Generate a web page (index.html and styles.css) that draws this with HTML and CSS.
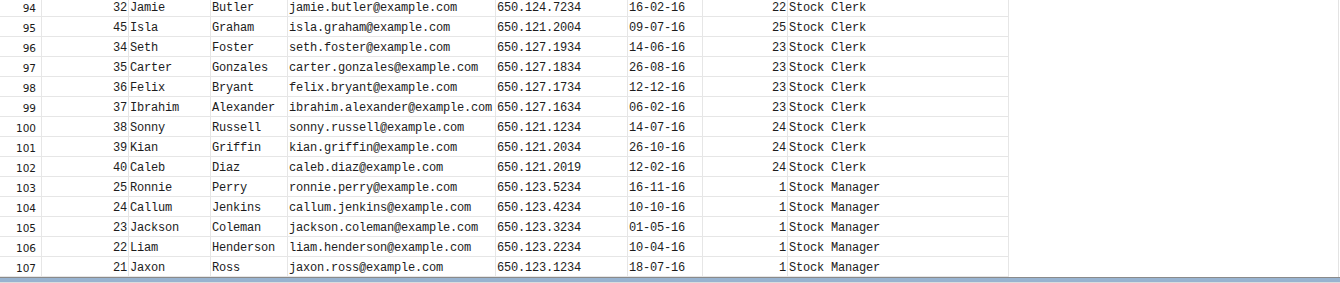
FILE: index.html
```html
<!DOCTYPE html>
<html>
<head>
<meta charset="utf-8">
<link rel="stylesheet" href="styles.css">
</head>
<body>
<div class="pane">
  <div class="rows">
    <div class="row"><div class="c rn">94</div><div class="c num">32</div><div class="c">Jamie</div><div class="c">Butler</div><div class="c">jamie.butler@example.com</div><div class="c">650.124.7234</div><div class="c">16-02-16</div><div class="c num">22</div><div class="c">Stock Clerk</div></div>
    <div class="row"><div class="c rn">95</div><div class="c num">45</div><div class="c">Isla</div><div class="c">Graham</div><div class="c">isla.graham@example.com</div><div class="c">650.121.2004</div><div class="c">09-07-16</div><div class="c num">25</div><div class="c">Stock Clerk</div></div>
    <div class="row"><div class="c rn">96</div><div class="c num">34</div><div class="c">Seth</div><div class="c">Foster</div><div class="c">seth.foster@example.com</div><div class="c">650.127.1934</div><div class="c">14-06-16</div><div class="c num">23</div><div class="c">Stock Clerk</div></div>
    <div class="row"><div class="c rn">97</div><div class="c num">35</div><div class="c">Carter</div><div class="c">Gonzales</div><div class="c">carter.gonzales@example.com</div><div class="c">650.127.1834</div><div class="c">26-08-16</div><div class="c num">23</div><div class="c">Stock Clerk</div></div>
    <div class="row"><div class="c rn">98</div><div class="c num">36</div><div class="c">Felix</div><div class="c">Bryant</div><div class="c">felix.bryant@example.com</div><div class="c">650.127.1734</div><div class="c">12-12-16</div><div class="c num">23</div><div class="c">Stock Clerk</div></div>
    <div class="row"><div class="c rn">99</div><div class="c num">37</div><div class="c">Ibrahim</div><div class="c">Alexander</div><div class="c">ibrahim.alexander@example.com</div><div class="c">650.127.1634</div><div class="c">06-02-16</div><div class="c num">23</div><div class="c">Stock Clerk</div></div>
    <div class="row"><div class="c rn">100</div><div class="c num">38</div><div class="c">Sonny</div><div class="c">Russell</div><div class="c">sonny.russell@example.com</div><div class="c">650.121.1234</div><div class="c">14-07-16</div><div class="c num">24</div><div class="c">Stock Clerk</div></div>
    <div class="row"><div class="c rn">101</div><div class="c num">39</div><div class="c">Kian</div><div class="c">Griffin</div><div class="c">kian.griffin@example.com</div><div class="c">650.121.2034</div><div class="c">26-10-16</div><div class="c num">24</div><div class="c">Stock Clerk</div></div>
    <div class="row"><div class="c rn">102</div><div class="c num">40</div><div class="c">Caleb</div><div class="c">Diaz</div><div class="c">caleb.diaz@example.com</div><div class="c">650.121.2019</div><div class="c">12-02-16</div><div class="c num">24</div><div class="c">Stock Clerk</div></div>
    <div class="row"><div class="c rn">103</div><div class="c num">25</div><div class="c">Ronnie</div><div class="c">Perry</div><div class="c">ronnie.perry@example.com</div><div class="c">650.123.5234</div><div class="c">16-11-16</div><div class="c num">1</div><div class="c">Stock Manager</div></div>
    <div class="row"><div class="c rn">104</div><div class="c num">24</div><div class="c">Callum</div><div class="c">Jenkins</div><div class="c">callum.jenkins@example.com</div><div class="c">650.123.4234</div><div class="c">10-10-16</div><div class="c num">1</div><div class="c">Stock Manager</div></div>
    <div class="row"><div class="c rn">105</div><div class="c num">23</div><div class="c">Jackson</div><div class="c">Coleman</div><div class="c">jackson.coleman@example.com</div><div class="c">650.123.3234</div><div class="c">01-05-16</div><div class="c num">1</div><div class="c">Stock Manager</div></div>
    <div class="row"><div class="c rn">106</div><div class="c num">22</div><div class="c">Liam</div><div class="c">Henderson</div><div class="c">liam.henderson@example.com</div><div class="c">650.123.2234</div><div class="c">10-04-16</div><div class="c num">1</div><div class="c">Stock Manager</div></div>
    <div class="row"><div class="c rn">107</div><div class="c num">21</div><div class="c">Jaxon</div><div class="c">Ross</div><div class="c">jaxon.ross@example.com</div><div class="c">650.123.1234</div><div class="c">18-07-16</div><div class="c num">1</div><div class="c">Stock Manager</div></div>
  </div>
</div>
<div class="footer"></div>
</body>
</html>
```
FILE: styles.css
```css
html, body {
  margin: 0;
  padding: 0;
  background: #ffffff;
  overflow: hidden;
}
body {
  width: 1340px;
  height: 283px;
  display: flex;
  flex-direction: column;
}
.pane {
  width: 1339px;
  height: 277px;
  box-sizing: border-box;
  border-right: 1px solid #e3e3e3;
  overflow: hidden;
}
.rows {
  margin-top: -3px;
  display: flex;
  flex-direction: column;
}
.row {
  display: grid;
  grid-template-columns: 42px 87px 82px 77px 208px 132px 75px 85px 221px;
  height: 20px;
}
.c {
  box-sizing: border-box;
  height: 20px;
  border-right: 1px solid #e6e6e6;
  border-bottom: 1px solid #e6e6e6;
  padding: 3px 0 0 1px;
  line-height: 16px;
  font-family: "Liberation Mono", "Courier New", monospace;
  font-size: 12px;
  letter-spacing: -0.2px;
  color: #1c1c1c;
  white-space: nowrap;
  overflow: hidden;
}
.c.num {
  text-align: right;
  padding: 3px 1px 0 0;
}
.c.rn {
  text-align: right;
  padding: 3px 5px 0 0;
  font-family: "DejaVu Sans", "Liberation Sans", sans-serif;
  font-size: 10.5px;
  letter-spacing: 0;
  color: #1a1a1a;
}
.footer {
  height: 6px;
  flex: none;
  box-sizing: border-box;
  border-top: 1px solid #8a8a8a;
  border-bottom: 1px solid #dcdcdc;
  background: #98b3d0;
  background-clip: padding-box;
}
```
